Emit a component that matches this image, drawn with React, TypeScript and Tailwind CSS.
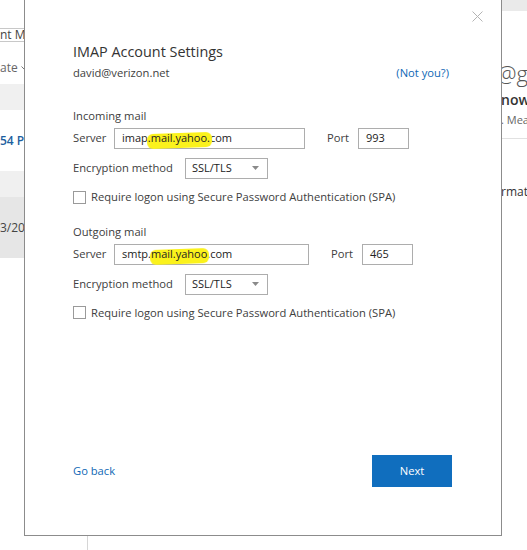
import React from "react";

const font = { fontFamily: '"Open Sans", "Noto Sans", sans-serif' };

function TextBox({ width, children }: { width: string; children: React.ReactNode }) {
  return (
    <div
      className={`flex h-[21px] ${width} items-center border border-[#adadad] bg-white px-[7px] text-[11px] text-[#222]`}
    >
      {children}
    </div>
  );
}

function Marker({ children }: { children: React.ReactNode }) {
  return (
    <span className="relative inline-block">
      <span className="absolute left-[-1px] right-[-2px] top-[3px] bottom-[-1px] -rotate-2 rounded-[6px] bg-[#fbf21c] blur-[0.6px]" />
      <span className="relative">{children}</span>
    </span>
  );
}

function Select() {
  return (
    <div className="flex h-[21px] w-[83px] items-center justify-between border border-[#adadad] bg-white pl-[6px] pr-[8px] text-[11px] text-[#222]">
      <span>SSL/TLS</span>
      <svg width="7" height="4" viewBox="0 0 7 4">
        <path d="M0 0 L7 0 L3.5 4 Z" fill="#8a8a8a" />
      </svg>
    </div>
  );
}

function Checkbox({ label }: { label: string }) {
  return (
    <div className="flex items-center gap-[5px]">
      <span className="h-[13px] w-[13px] border border-[#9a9a9a] bg-white" />
      <span>{label}</span>
    </div>
  );
}

function MailSection({
  title,
  server,
  serverWidth,
  port,
  portWidth,
}: {
  title: string;
  server: React.ReactNode;
  serverWidth: string;
  port: string;
  portWidth: string;
}) {
  return (
    <div className="flex flex-col">
      <p className="leading-[16px]">{title}</p>
      <div className="mt-[4px] flex items-center">
        <span className="w-[41px]">Server</span>
        <TextBox width={serverWidth}>{server}</TextBox>
        <span className="ml-[22px] w-[31px]">Port</span>
        <TextBox width={portWidth}>{port}</TextBox>
      </div>
      <div className="mt-[9px] flex items-center">
        <span className="w-[112px]">Encryption method</span>
        <Select />
      </div>
      <div className="mt-[10px]">
        <Checkbox label="Require logon using Secure Password Authentication (SPA)" />
      </div>
    </div>
  );
}

function Dialog() {
  return (
    <div className="absolute left-[24px] top-[-1px] flex h-[537px] w-[478px] flex-col border border-[#8c8c8c] bg-white text-[11.2px] text-[#404040]">
      <div className="flex justify-end pr-[18px] pt-[11px]">
        <svg width="11" height="11" viewBox="0 0 11 11" stroke="#b4b4b4" strokeWidth="1">
          <path d="M0.5 0.5 L10.5 10.5 M10.5 0.5 L0.5 10.5" />
        </svg>
      </div>
      <div className="flex flex-1 flex-col pl-[48px] pr-[52px]">
        <h1 className="mt-[20px] text-[14.4px] leading-[20px] text-[#333]">IMAP Account Settings</h1>
        <div className="mt-[3px] flex items-center justify-between">
          <span>david@verizon.net</span>
          <span className="text-[#1068b5]">(Not you?)</span>
        </div>
        <div className="mt-[26px]">
          <MailSection
            title="Incoming mail"
            server={
              <span>
                imap<Marker>.mail.yahoo.</Marker>com
              </span>
            }
            serverWidth="w-[191px]"
            port="993"
            portWidth="w-[51px]"
          />
        </div>
        <div className="mt-[18px]">
          <MailSection
            title="Outgoing mail"
            server={
              <span>
                smtp.<Marker>mail.yahoo</Marker>.com
              </span>
            }
            serverWidth="w-[195px]"
            port="465"
            portWidth="w-[51px]"
          />
        </div>
        <div className="flex-1" />
        <div className="mb-[48px] flex items-center justify-between">
          <span className="text-[#1068b5]">Go back</span>
          <button className="mr-[-3px] h-[32px] w-[80px] bg-[#106ebe] text-[11.2px] text-white">Next</button>
        </div>
      </div>
    </div>
  );
}

export default function App() {
  return (
    <div className="relative flex h-[550px] w-[527px] overflow-hidden bg-white" style={font}>
      <aside className="flex w-[88px] shrink-0 flex-col overflow-hidden border-r border-[#d6d6d6] text-[12px]">
        <div className="mt-[28px] flex h-[14px] items-center border-y border-[#c8c8c8] text-[#444]">
          <span className="whitespace-nowrap">nt Mailbox</span>
        </div>
        <div className="mt-[18px] flex h-[16px] items-center gap-[3px] whitespace-nowrap text-[#666]">
          ate
          <svg width="8" height="5" viewBox="0 0 8 5" fill="none" stroke="#777">
            <path d="M0.5 0.5 L4 4 L7.5 0.5" />
          </svg>
        </div>
        <div className="mt-[8px] h-[26px] bg-[#f0f0f0]" />
        <div className="flex h-[61px] items-center whitespace-nowrap font-semibold text-[#1d5fa0]">54 PM</div>
        <div className="h-[26px] bg-[#f0f0f0]" />
        <div className="flex h-[61px] items-center whitespace-nowrap bg-[#e6e6e6] text-[#444]">3/2019</div>
      </aside>
      <div className="flex-1" />
      <section className="flex w-[26px] shrink-0 flex-col overflow-hidden">
        <div className="h-[11px] bg-[#eaeaea]" />
        <div className="mt-[50px] -ml-[4px] whitespace-nowrap text-[22px] font-light leading-[24px] text-[#555]">@gmail</div>
        <div className="mt-[6px] whitespace-nowrap text-[14px] font-semibold leading-[18px] text-[#333]">now</div>
        <div className="mt-[4px] whitespace-nowrap text-[11px] leading-[14px] text-[#666]">. Meadow</div>
        <div className="mt-[11px] h-px bg-[#e1e1e1]" />
        <div className="mt-[44px] whitespace-nowrap text-[12px] text-[#333]">rmation</div>
      </section>
      <Dialog />
    </div>
  );
}
